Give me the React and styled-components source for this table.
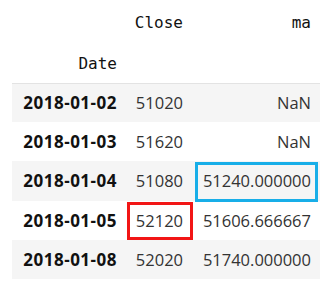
import React from 'react';
import styled, { createGlobalStyle } from 'styled-components';

const GlobalStyle = createGlobalStyle`
    body {
        margin: 0;
        background: #ffffff;
    }
`

const Wrapper = styled.div`
    padding: 0 0 0 12px;
`

const Frame = styled.table`
    border-collapse: collapse;
    border-spacing: 0;
    table-layout: fixed;
    width: 308px;
`

const Head = styled.thead`
    border-bottom: 1px solid #e3e3e3;
`

const HeadRow = styled.tr`
    height: ${props => props.$height}px;
`

const HeadCell = styled.th`
    padding: 0 ${props => props.$pad}px 0 0;
    text-align: right;
    vertical-align: middle;
    font-family: "DejaVu Sans Mono", "Liberation Mono", monospace;
    font-size: 16px;
    font-weight: normal;
    color: #111111;
`

const BodyRow = styled.tr`
    height: 39.2px;
    background: ${props => props.$odd ? '#f5f5f5' : '#ffffff'};
`

const IndexCell = styled.th`
    padding: 0 9px 0 0;
    text-align: right;
    vertical-align: middle;
    font-family: "Open Sans", "Noto Sans", sans-serif;
    font-size: 17px;
    font-weight: bold;
    letter-spacing: 0.5px;
    color: #111111;
`

const Cell = styled.td`
    position: relative;
    padding: 0 ${props => props.$pad}px 0 0;
    text-align: right;
    vertical-align: middle;
    font-family: "Open Sans", "Noto Sans", sans-serif;
    font-size: 16.5px;
    color: #333333;

    &::after {
        content: '';
        display: ${props => props.$mark ? 'block' : 'none'};
        position: absolute;
        top: ${props => props.$mark === 'red' ? '1.5px' : '0.6px'};
        left: 1px;
        right: ${props => props.$mark === 'red' ? '1px' : '2px'};
        bottom: ${props => props.$mark === 'red' ? '-0.5px' : '-1.4px'};
        border: 3px solid ${props => props.$mark === 'red' ? '#f21616' : '#18aee8'};
        pointer-events: none;
    }
`

const rows = [
    { date: '2018-01-02', close: '51020', ma: 'NaN' },
    { date: '2018-01-03', close: '51620', ma: 'NaN' },
    { date: '2018-01-04', close: '51080', ma: '51240.000000', maMark: 'blue' },
    { date: '2018-01-05', close: '52120', ma: '51606.666667', closeMark: 'red' },
    { date: '2018-01-08', close: '52020', ma: '51740.000000' },
];

const App = () => {
    return (
        <Wrapper>
            <GlobalStyle />
            <Frame>
                <colgroup>
                    <col style={{ width: 114 }} />
                    <col style={{ width: 68 }} />
                    <col style={{ width: 126 }} />
                </colgroup>
                <Head>
                    <HeadRow $height={44}>
                        <HeadCell $pad={9}></HeadCell>
                        <HeadCell $pad={11}>Close</HeadCell>
                        <HeadCell $pad={9}>ma</HeadCell>
                    </HeadRow>
                    <HeadRow $height={39}>
                        <HeadCell $pad={9}>Date</HeadCell>
                        <HeadCell $pad={11}></HeadCell>
                        <HeadCell $pad={9}></HeadCell>
                    </HeadRow>
                </Head>
                <tbody>
                    {rows.map((row, i) => (
                        <BodyRow key={row.date} $odd={i % 2 === 0}>
                            <IndexCell>{row.date}</IndexCell>
                            <Cell $pad={11} $mark={row.closeMark}>{row.close}</Cell>
                            <Cell $pad={9} $mark={row.maMark}>{row.ma}</Cell>
                        </BodyRow>
                    ))}
                </tbody>
            </Frame>
        </Wrapper>
    );
};

export default App;
